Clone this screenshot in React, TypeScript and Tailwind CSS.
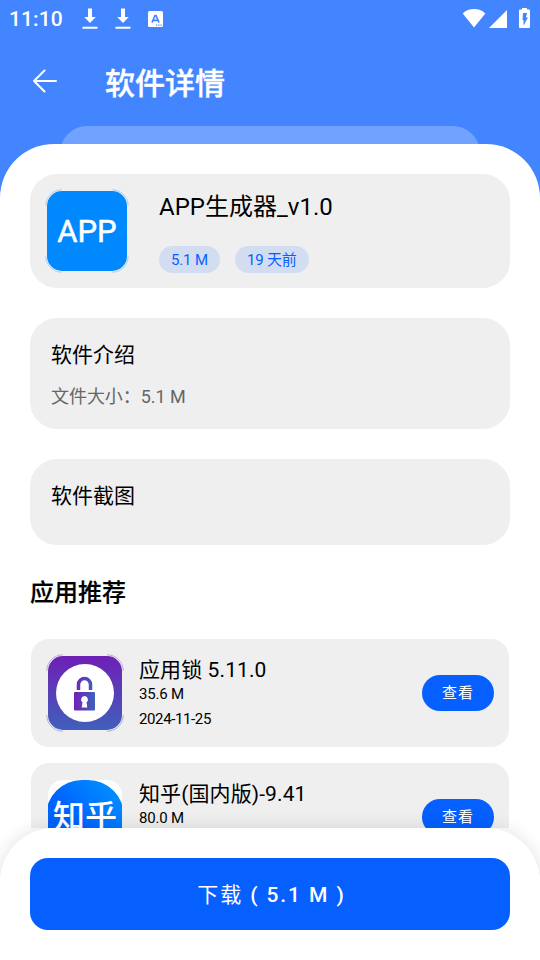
import type { ReactNode } from 'react';

interface RecommendedApp {
    name: string;
    size: string;
    date: string;
    icon: ReactNode;
}

function DownloadIcon() {
    return (
        <svg width="16" height="22" viewBox="0 0 16 22" fill="#fff">
            <path d="M6 1.500h4v8.500h3.800l-5.800 6-5.800-6h3.800zM.5 19.700h15v2H.5z" />
        </svg>
    );
}

function StatusBar() {
    return (
        <div className="flex h-9 items-center text-white">
            <span className="ml-[9px] w-[73px] pt-px text-[21px] leading-9 font-medium tracking-[0.1px]">11:10</span>
            <div className="flex flex-1 items-center gap-[17px]">
                <DownloadIcon />
                <DownloadIcon />
                <svg className="mt-px" width="15" height="16" viewBox="0 0 15 16">
                    <rect width="15" height="16" rx="1.5" fill="#fff" />
                    <path
                        d="M4 11.500 7 4.500h1l3 7M5.200 9.400h4.600"
                        fill="none"
                        stroke="#4285ff"
                        strokeWidth="1.700"
                    />
                    <path d="M8 13.500h1.200v1.200H8zM10.300 13.500h1.200v1.200h-1.200zM12.500 13.500h1.200v1.200h-1.200z" fill="#4285ff" />
                </svg>
            </div>
            <svg width="78" height="22" viewBox="462 6 78 22" fill="#fff">
                <path d="M462.700 12.400C468.500 6.500 479.500 6.500 485.300 12.400L474 26.500z" />
                <path d="M507 9v18h-18z" />
                <path d="M522 7h5v1.500h2q1 0 1 1V26q0 1-1 1h-9q-1 0-1-1V9.500q0-1 1-1h2z" />
                <path d="M523 12h4l-1 4.500h2l-4.500 8v-5.500h-1z" fill="#4285ff" />
            </svg>
        </div>
    );
}

function Header() {
    return (
        <header className="h-[126px]">
            <StatusBar />
            <div className="flex h-[90px] items-center pl-[33px]">
                <svg
                    width="24"
                    height="24"
                    viewBox="0 0 24 24"
                    fill="none"
                    stroke="#fff"
                    strokeWidth="2"
                    strokeLinecap="round"
                    strokeLinejoin="round"
                >
                    <path d="M11.500 1.500 1 12l10.500 10.500M1 12h22" />
                </svg>
                <h1 className="mt-[5px] ml-12 text-[30px] leading-9 font-medium text-white [-webkit-text-stroke:0.4px_#fff]">
                    软件详情
                </h1>
            </div>
        </header>
    );
}

// Thin arcs that hug the four corners of an app icon
function CornerArcs({ size, color }: { size: number; color: string }) {
    const a = -1.2;
    const b = size + 1.2;
    return (
        <svg
            className="absolute -inset-0.5"
            width={size + 4}
            height={size + 4}
            viewBox={`-2 -2 ${size + 4} ${size + 4}`}
            fill="none"
            stroke={color}
            strokeWidth="0.6"
        >
            <path
                d={`M${a} 15A16 16 0 0 1 15 ${a}M${size - 15} ${a}A16 16 0 0 1 ${b} 15M${b} ${size - 15}A16 16 0 0 1 ${size - 15} ${b}M15 ${b}A16 16 0 0 1 ${a} ${size - 15}`}
            />
        </svg>
    );
}

function LockIcon() {
    return (
        <div className="relative size-[74px] shrink-0">
            <svg width="74" height="74" viewBox="0 0 74 74">
                <defs>
                    <linearGradient id="lock-bg" x1="0" y1="0" x2="0" y2="1">
                        <stop offset="0" stopColor="#6f1fb5" />
                        <stop offset="1" stopColor="#4060bb" />
                    </linearGradient>
                    <linearGradient id="lock-fg" x1="26" y1="0" x2="47" y2="0" gradientUnits="userSpaceOnUse">
                        <stop offset="0" stopColor="#7420b6" />
                        <stop offset="1" stopColor="#3c62ba" />
                    </linearGradient>
                </defs>
                <rect width="74" height="74" rx="15" fill="url(#lock-bg)" />
                <circle cx="37" cy="37" r="29" fill="#fff" />
                <path
                    d="M30.500 34v-5.500a6 6 0 0 1 12 0V34"
                    fill="none"
                    stroke="url(#lock-fg)"
                    strokeWidth="3.500"
                />
                <rect x="26" y="36" width="21" height="18.500" rx="1" fill="url(#lock-fg)" />
                <path d="M36.500 40a3.500 3.500 0 0 1 2 6.300l.8 5.200h-5.600l.8-5.200a3.500 3.500 0 0 1 2-6.300" fill="#fff" />
            </svg>
            <CornerArcs size={74} color="#8f82cf" />
        </div>
    );
}

function ZhihuIcon() {
    return (
        <div className="relative size-[74px] shrink-0 overflow-hidden rounded-[15px] bg-white">
            <div className="-ml-0.5 flex h-20 w-[78px] justify-center rounded-[36px] bg-linear-to-tr from-[#0062ff] from-45% to-[#0098ff] pt-[19px] text-[32px] leading-9 font-medium text-white">
                知乎
            </div>
        </div>
    );
}

const apps: RecommendedApp[] = [
    { name: '应用锁 5.11.0', size: '35.6 M', date: '2024-11-25', icon: <LockIcon /> },
    { name: '知乎(国内版)-9.41', size: '80.0 M', date: '2024-11-25', icon: <ZhihuIcon /> },
];

function AppRow({ app }: { app: RecommendedApp }) {
    return (
        <div className="mx-px flex h-[108px] items-center rounded-[18px] bg-[#efefef] pr-[15px] pl-[17px]">
            {app.icon}
            <div className="mt-[3px] ml-[17px] flex-1">
                <h3 className="text-[21px] leading-6 tracking-[0.1px]">{app.name}</h3>
                <p className="text-[15px] leading-[25px] tracking-[-0.2px]">{app.size}</p>
                <p className="text-[15px] leading-[25px] tracking-[-0.38px]">{app.date}</p>
            </div>
            <button className="h-9 w-[72px] rounded-[18px] bg-[#0560ff] text-[15px] leading-9 tracking-[1px] text-white">
                查看
            </button>
        </div>
    );
}

function Tag({ children }: { children: ReactNode }) {
    return (
        <span className="h-[27px] rounded-full bg-[#d3ddf1] px-3 pt-px text-[15px] leading-[27px] tracking-[-0.15px] text-[#0560ff]">
            {children}
        </span>
    );
}

export default function App() {
    return (
        <div className="flex h-[960px] w-[540px] flex-col overflow-hidden bg-[#4285ff] font-['Roboto','Noto_Sans_CJK_SC',sans-serif] text-black">
            <Header />
            <div className="mx-[60px] -mb-9 h-[54px] shrink-0 rounded-t-[27px] bg-[#71a2ff]" />

            <main className="relative h-[684px] shrink-0 overflow-hidden rounded-t-[54px] bg-white px-[30px] pt-[30px]">
                <section className="flex h-[114px] rounded-[27px] bg-[#efefef] p-[17px]">
                    <div className="relative flex size-20 items-center justify-center rounded-[15px] bg-[#0089ff] pt-0.5 text-[31px] text-white [-webkit-text-stroke:0.5px_#fff]">
                        APP
                        <CornerArcs size={80} color="#7dbcf0" />
                    </div>
                    <div className="ml-8">
                        <h2 className="h-[55px] text-2xl leading-8">APP生成器_v1.0</h2>
                        <div className="flex gap-[15px]">
                            <Tag>5.1 M</Tag>
                            <Tag>19 天前</Tag>
                        </div>
                    </div>
                </section>

                <section className="mt-[30px] h-[111px] rounded-[27px] bg-[#efefef] px-[21px] pt-[21px]">
                    <h2 className="text-[21px] leading-8">软件介绍</h2>
                    <p className="mt-2.5 text-lg leading-8 tracking-[-0.05px] text-[#666]">文件大小：5.1 M</p>
                </section>

                <section className="mt-[30px] h-[86px] rounded-[27px] bg-[#efefef] px-[21px] pt-[21px]">
                    <h2 className="text-[21px] leading-8">软件截图</h2>
                </section>

                <h2 className="mt-[30px] text-2xl leading-9 font-medium [-webkit-text-stroke:0.2px_#000]">应用推荐</h2>
                <div className="mt-[28px] flex flex-col gap-4">
                    {apps.map((app) => (
                        <AppRow key={app.name} app={app} />
                    ))}
                </div>
            </main>

            {/* sits under the bottom bar so its rounded corners show the page */}
            <div className="h-[132px] shrink-0 bg-white">
                <div className="relative h-full rounded-t-[54px] bg-white px-[30px] pt-[30px] shadow-[0_0_18px_rgba(0,0,0,0.12)]">
                    <button className="h-[72px] w-full rounded-[18px] bg-[#0560ff] pt-0.5 pl-[3px] text-[21px] leading-[70px] tracking-[1.900px] text-white">
                        下载<span className="font-medium"> ( 5.1 M )</span>
                    </button>
                </div>
            </div>
        </div>
    );
}
